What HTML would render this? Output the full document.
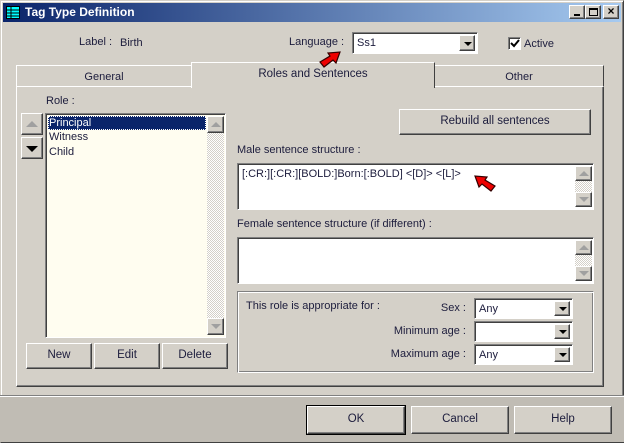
<!DOCTYPE html>
<html><head><style>
*{box-sizing:border-box;margin:0;padding:0}
body{width:624px;height:443px;background:#d4d0c8;font-family:"Liberation Sans",sans-serif;font-size:11px;color:#1c1c3c;position:relative;overflow:hidden}
.a{position:absolute}
.win{left:0;top:0;width:624px;height:443px;border:1px solid;border-color:#d4d0c8 #404040 #404040 #d4d0c8;box-shadow:inset 1px 1px #fff,inset -1px -1px #808080}
.title{left:3px;top:3px;width:618px;height:19px;background:linear-gradient(90deg,#0a246a,#a6caf0);color:#fff;font-weight:bold;font-size:12px;line-height:19px;padding-left:22px}
.raised{background:#d4d0c8;border:1px solid;border-color:#fff #404040 #404040 #fff;box-shadow:inset -1px -1px #808080}
.sunk{border:1px solid;border-color:#808080 #fff #fff #808080;box-shadow:inset 1px 1px #404040}
.btn{text-align:center;line-height:23px;font-size:11.5px}
.sb{width:17px;background:repeating-conic-gradient(#d4d0c8 0 25%,#fff 0 50%) 0 0/2px 2px}
.arr{width:17px;height:17px}
.combo{background:#fff}
.dd{position:absolute;right:2px;top:2px;width:16px;height:16px}
.tri{width:0;height:0;border-left:4px solid transparent;border-right:4px solid transparent;border-top:4px solid #000;position:absolute;left:4px;top:6px}
.up{width:0;height:0;border-left:5px solid transparent;border-right:5px solid transparent;border-bottom:5px solid #a0a0a0;position:absolute;left:3px;top:5px}
.dn{width:0;height:0;border-left:5px solid transparent;border-right:5px solid transparent;border-top:5px solid #a0a0a0;position:absolute;left:3px;top:5px}
</style></head><body>
<div class="a win"></div>
<div class="a title">Tag Type Definition</div>
<svg class="a" style="left:6px;top:6px" width="14" height="13"><rect x="0.5" y="0.5" width="13" height="12" fill="#0ff" stroke="#000"/><path d="M1 4H13M1 7H13M1 10H13M5 1V12" stroke="#000"/></svg>
<div class="a raised" style="left:569px;top:5px;width:16px;height:14px"><div class="a" style="left:4px;top:8px;width:6px;height:2px;background:#000"></div></div>
<div class="a raised" style="left:585px;top:5px;width:16px;height:14px"><div class="a" style="left:3px;top:2px;width:9px;height:8px;border:1px solid #000;border-top-width:2px"></div></div>
<div class="a raised" style="left:603px;top:5px;width:16px;height:14px;font-size:12px;line-height:11px;text-align:center;font-weight:bold;color:#000">×</div>
<div class="a" style="left:0;top:395px;width:624px;height:47px;background:#c0bcb4;border-top:1px solid #808080;box-shadow:inset 0 1px #fff"></div>

<div class="a" style="left:79px;top:36px">Label :</div>
<div class="a" style="left:120px;top:37px">Birth</div>
<div class="a" style="left:289px;top:36px">Language :</div>
<div class="a sunk combo" style="left:352px;top:32px;width:126px;height:22px"><span class="a" style="left:4px;top:4px">Ss1</span><div class="dd raised"><div class="tri"></div></div></div>
<div class="a sunk" style="left:508px;top:37px;width:13px;height:13px;background:#fff"><svg class="a" style="left:1px;top:1px" width="10" height="10"><path d="M1 4L4 7L9 1" stroke="#000" stroke-width="2" fill="none"/></svg></div>
<div class="a" style="left:524px;top:38px">Active</div>

<div class="a" style="left:16px;top:86px;width:588px;height:301px;border:1px solid;border-color:#fff #404040 #404040 #fff;box-shadow:inset -1px -1px #808080"></div>
<div class="a" style="left:16px;top:65px;width:176px;height:22px;border:1px solid;border-color:#fff transparent transparent #fff;border-bottom:1px solid #fff;text-align:center;line-height:22px">General</div>
<div class="a" style="left:434px;top:65px;width:170px;height:22px;border:1px solid;border-color:#fff #404040 #fff #808080;text-align:center;line-height:22px">Other</div>
<div class="a" style="left:191px;top:62px;width:244px;height:26px;background:#d4d0c8;border:1px solid;border-color:#fff #404040 transparent #fff;border-bottom:none;text-align:center;line-height:23px;font-size:11.5px">Roles and Sentences</div>

<div class="a" style="left:46px;top:95px">Role :</div>
<div class="a raised" style="left:21px;top:113px;width:22px;height:22px"><div class="up" style="top:7px;border-left-width:6px;border-right-width:6px;border-bottom-width:6px;left:4px"></div></div>
<div class="a raised" style="left:21px;top:137px;width:22px;height:22px"><div class="a" style="left:4px;top:8px;width:0;height:0;border-left:6px solid transparent;border-right:6px solid transparent;border-top:6px solid #000"></div></div>
<div class="a sunk" style="left:45px;top:113px;width:181px;height:225px;background:#fffdf0">
 <div class="a" style="left:2px;top:2px;width:158px;height:14px;background:#0a246a;color:#fff;outline:1px dotted #fff;outline-offset:-1px;line-height:14px;padding-left:1px">Principal</div>
 <div class="a" style="left:3px;top:17px">Witness</div>
 <div class="a" style="left:3px;top:32px">Child</div>
 <div class="a sb" style="left:161px;top:2px;height:219px"></div>
 <div class="a raised arr" style="left:161px;top:2px"><div class="up"></div></div>
 <div class="a raised arr" style="left:161px;top:204px"><div class="dn"></div></div>
</div>
<div class="a raised btn" style="left:26px;top:343px;width:66px;height:26px">New</div>
<div class="a raised btn" style="left:94px;top:343px;width:66px;height:26px">Edit</div>
<div class="a raised btn" style="left:162px;top:343px;width:66px;height:26px">Delete</div>

<div class="a raised btn" style="left:399px;top:109px;width:192px;height:26px">Rebuild all sentences</div>
<div class="a" style="left:237px;top:144px">Male sentence structure :</div>
<div class="a sunk" style="left:237px;top:163px;width:357px;height:47px;background:#fff">
 <div class="a" style="left:4px;top:4px">[:CR:][:CR:][BOLD:]Born:[:BOLD] &lt;[D]&gt; &lt;[L]&gt;</div>
 <div class="a sb" style="left:337px;top:2px;height:41px"></div>
 <div class="a raised arr" style="left:337px;top:2px;height:15px"><div class="up" style="top:4px"></div></div>
 <div class="a raised arr" style="left:337px;top:28px;height:15px"><div class="dn" style="top:4px"></div></div>
</div>
<div class="a" style="left:237px;top:218px">Female sentence structure (if different) :</div>
<div class="a sunk" style="left:237px;top:237px;width:357px;height:47px;background:#fff">
 <div class="a sb" style="left:337px;top:2px;height:41px"></div>
 <div class="a raised arr" style="left:337px;top:2px;height:15px"><div class="up" style="top:4px"></div></div>
 <div class="a raised arr" style="left:337px;top:28px;height:15px"><div class="dn" style="top:4px"></div></div>
</div>
<div class="a" style="left:237px;top:291px;width:357px;height:82px;border:1px solid;border-color:#808080 #fff #fff #808080;box-shadow:inset 1px 1px #fff,inset -1px -1px #808080"></div>
<div class="a" style="left:246px;top:300px">This role is appropriate for :</div>
<div class="a" style="left:300px;top:302px;width:166px;text-align:right">Sex :</div>
<div class="a" style="left:300px;top:325px;width:166px;text-align:right">Minimum age :</div>
<div class="a" style="left:300px;top:348px;width:166px;text-align:right">Maximum age :</div>
<div class="a sunk combo" style="left:474px;top:298px;width:99px;height:21px"><span class="a" style="left:4px;top:4px">Any</span><div class="dd raised" style="height:15px"><div class="tri" style="top:5px"></div></div></div>
<div class="a sunk combo" style="left:474px;top:321px;width:99px;height:21px"><div class="dd raised" style="height:15px"><div class="tri" style="top:5px"></div></div></div>
<div class="a sunk combo" style="left:474px;top:344px;width:99px;height:21px"><span class="a" style="left:4px;top:4px">Any</span><div class="dd raised" style="height:15px"><div class="tri" style="top:5px"></div></div></div>

<div class="a raised btn" style="left:307px;top:406px;width:98px;height:28px;outline:1px solid #000;line-height:25px">OK</div>
<div class="a raised btn" style="left:411px;top:406px;width:98px;height:28px;line-height:25px">Cancel</div>
<div class="a raised btn" style="left:514px;top:406px;width:98px;height:28px;line-height:25px">Help</div>

<svg class="a" style="left:318px;top:48px" width="26" height="22"><path d="M2 14L12 8L10 5L22 4L18 15L15 12L6 19Z" fill="#e00" stroke="#300" stroke-width="1.2"/></svg>
<svg class="a" style="left:471px;top:172px" width="26" height="22"><path d="M24 14L14 8L16 5L4 4L8 15L11 12L20 19Z" fill="#e00" stroke="#300" stroke-width="1.2"/></svg>
</body></html>
